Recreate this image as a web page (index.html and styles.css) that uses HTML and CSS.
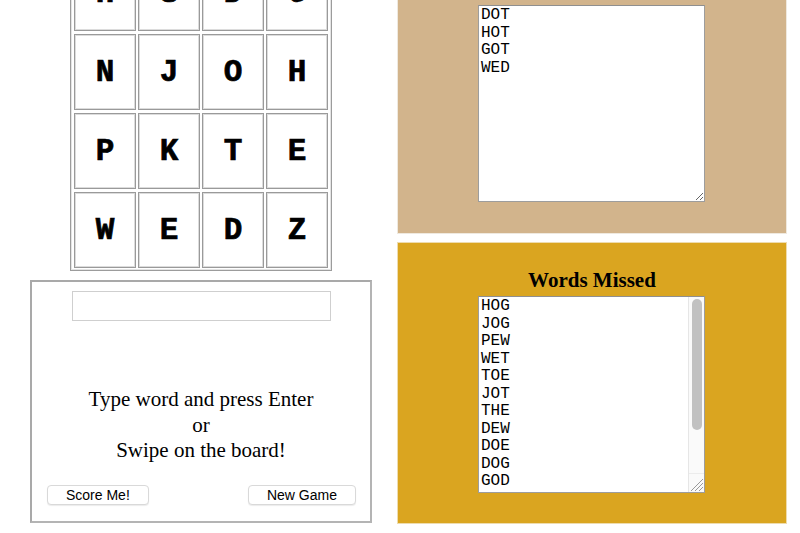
FILE: index.html
```html
<!DOCTYPE html>
<html lang="en">
<head>
<meta charset="utf-8">
<title>Word Board</title>
<link rel="stylesheet" href="styles.css">
</head>
<body>
<div class="page">
  <div class="left-col">
    <div class="board">
      <div class="cell">H</div><div class="cell">S</div><div class="cell">D</div><div class="cell">G</div>
      <div class="cell">N</div><div class="cell">J</div><div class="cell">O</div><div class="cell">H</div>
      <div class="cell">P</div><div class="cell">K</div><div class="cell">T</div><div class="cell">E</div>
      <div class="cell">W</div><div class="cell">E</div><div class="cell">D</div><div class="cell">Z</div>
    </div>
    <div class="controls">
      <input class="word-input" type="text">
      <div class="message">Type word and press Enter<br>or<br>Swipe on the board!</div>
      <div class="buttons">
        <button class="btn">Score Me!</button>
        <button class="btn">New Game</button>
      </div>
    </div>
  </div>
  <div class="right-col">
    <div class="panel panel-found">
      <h2 class="panel-title">Words Found</h2>
      <div class="list-wrap">
        <textarea class="word-list">DOT
HOT
GOT
WED</textarea>
      </div>
    </div>
    <div class="panel panel-missed">
      <h2 class="panel-title">Words Missed</h2>
      <div class="list-wrap">
        <textarea class="word-list">HOG
JOG
PEW
WET
TOE
JOT
THE
DEW
DOE
DOG
GOD
HOE
TWO
TOW
HEW</textarea>
        <div class="fake-scroll">
          <div class="fake-track"><div class="fake-thumb"></div></div>
          <div class="fake-corner">
            <svg width="14" height="18" viewBox="0 0 14 18">
              <path d="M13 5 L1 17 M13 9 L5 17 M13 13 L9 17" stroke="#9a9a9a" stroke-width="1" fill="none"/>
            </svg>
          </div>
        </div>
      </div>
    </div>
  </div>
</div>
</body>
</html>
```
FILE: styles.css
```css
html, body {
  margin: 0;
  padding: 0;
  background: #ffffff;
  overflow: hidden;
}

.page {
  display: flex;
  gap: 3px;
  padding-left: 8px;
  margin-top: -49px;
  font-family: "Liberation Serif", "Times New Roman", serif;
}

.left-col {
  width: 386px;
  display: flex;
  flex-direction: column;
  align-items: center;
}

.board {
  display: grid;
  grid-template-columns: repeat(4, 62px);
  grid-template-rows: repeat(4, 76px);
  column-gap: 2px;
  row-gap: 3px;
  padding: 3px 3px 2px 3px;
  border: 1px solid #9c9c9c;
  box-shadow: inset 0 0 0 1px #e4e4e4;
}

.cell {
  box-sizing: border-box;
  border: 1px solid #9a9a9a;
  box-shadow: inset 0 0 0 1px #dcdcdc;
  display: flex;
  align-items: center;
  justify-content: center;
  font-family: "Liberation Mono", "Courier New", monospace;
  font-weight: bold;
  font-size: 31px;
  -webkit-text-stroke: 0.7px #000;
  color: #000;
}

.controls {
  box-sizing: border-box;
  width: 342px;
  height: 243px;
  margin-top: 9px;
  border: 2px solid #a9a9a9;
  border-right-color: #b4b4b4;
  border-bottom-color: #b4b4b4;
  display: flex;
  flex-direction: column;
  align-items: center;
}

.word-input {
  box-sizing: border-box;
  width: 259px;
  height: 30px;
  margin: 9px 0 0 1px;
  border: 1px solid #cfcfcf;
  background: #fff;
  padding: 2px 4px;
  font-size: 16px;
}

.message {
  margin-top: 66px;
  font-size: 21px;
  line-height: 25.5px;
  text-align: center;
  color: #000;
}

.buttons {
  align-self: stretch;
  display: flex;
  justify-content: space-between;
  padding: 0 14px 0 15px;
  margin-top: 21px;
}

.btn {
  height: 20px;
  padding: 0 18px;
  background: #ffffff;
  border: 1px solid #d9d9d9;
  border-radius: 4px;
  box-shadow: 0 1px 1px rgba(0,0,0,0.08);
  font-family: "Liberation Sans", Arial, sans-serif;
  font-size: 14px;
  line-height: 18px;
  color: #000;
}

.right-col {
  width: 390px;
  display: flex;
  flex-direction: column;
  gap: 8px;
}

.panel {
  box-sizing: border-box;
  height: 283px;
  border: 1px solid #efe9df;
  padding: 25px 0 0 0;
  display: flex;
  flex-direction: column;
  align-items: center;
}

.panel-found {
  background: #d2b48c;
}

.panel-missed {
  height: 282px;
  background: #daa520;
  border-color: #eedcae;
}

.panel-title {
  margin: 0 0 4px 0;
  font-size: 21px;
  line-height: 24px;
  font-weight: bold;
  color: #000;
}

.list-wrap {
  position: relative;
  width: 227px;
  height: 197px;
  margin-left: -1px;
}

.word-list {
  box-sizing: border-box;
  display: block;
  width: 227px;
  height: 197px;
  margin: 0;
  padding: 1px 2px;
  border: 1px solid #9d9d9d;
  border-top-color: #8f8f8f;
  background: #fff;
  font-family: "Liberation Mono", "Courier New", monospace;
  font-size: 16px;
  line-height: 17.5px;
  color: #000;
  resize: both;
  overflow-y: auto;
}

.fake-scroll {
  position: absolute;
  top: 1px;
  right: 1px;
  bottom: 1px;
  width: 15px;
  display: flex;
  flex-direction: column;
  background: #fafafa;
  border-left: 1px solid #e6e6e6;
  pointer-events: none;
}

.fake-track {
  flex: 1;
  padding: 2px 0 0 3px;
}

.fake-thumb {
  width: 10px;
  height: 131px;
  border-radius: 5px;
  background: #c1c1c1;
}

.fake-corner {
  height: 18px;
  border-top: 1px solid #ececec;
  display: flex;
  justify-content: flex-end;
}
```
